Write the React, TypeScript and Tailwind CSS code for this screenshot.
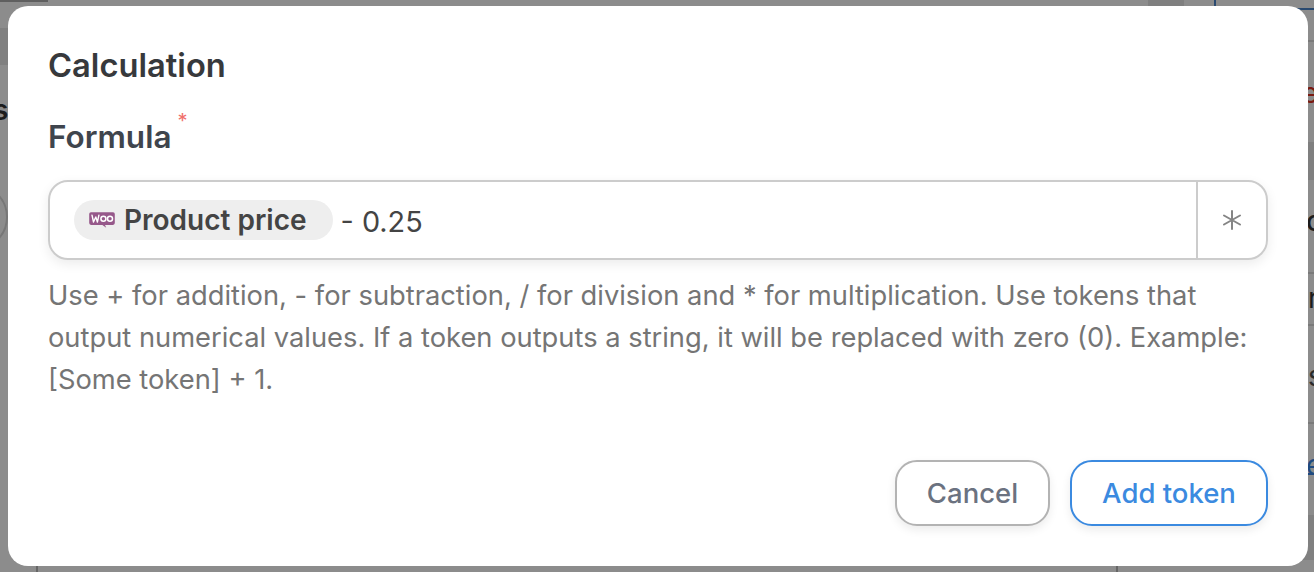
function Rule() {
  return <div className="h-[2px] w-full bg-[#7a7a7a]" />;
}

export default function App() {
  return (
    <div className="relative flex h-[572px] w-[1314px] flex-col overflow-hidden bg-[#8c8c8c] font-['Inter',sans-serif]">
      <div className="flex h-[6px] shrink-0">
        <div className="w-[48px] border-t-2 border-[#5f5f5f]" />
        <div className="w-[1100px]" />
        <div className="w-[36px] bg-[#7f7f7f]" />
        <div className="w-[30px]" />
        <div className="w-[2px] bg-[#2a4a70]" />
      </div>

      <div className="flex h-[560px] shrink-0 justify-between">
        <div className="flex w-[8px] flex-col overflow-hidden">
          <div className="mt-[22px] h-[37px] shrink-0 bg-[#808080]" />
          <span className="ml-[-7px] mt-[27px] text-[28px] font-semibold leading-[36px] text-[#1c1c1c]">s</span>
          <div className="ml-[-58px] mt-[56px] h-[66px] w-[66px] shrink-0 rounded-full border-2 border-[#777777]" />
        </div>
        <div className="flex w-[18px] flex-col overflow-hidden">
          <div className="mt-[2px] h-[2px] shrink-0 bg-[#2a4a70]" />
          <div className="mt-[30px]"><Rule /></div>
          <span className="mt-[33px] pl-[6px] text-[28px] leading-[36px] text-[#7a1a10]">e</span>
          <div className="mt-[31px] h-[38px] shrink-0 bg-[#7f7f7f]" />
          <span className="mt-[23px] pl-[10px] text-[28px] font-medium leading-[36px] text-[#1c1c1c]">c</span>
          <div className="mt-[33px]"><Rule /></div>
          <span className="mt-[6px] pl-[12px] text-[28px] leading-[36px] text-[#1c1c1c]">r</span>
          <div className="mt-[8px]"><Rule /></div>
          <span className="mt-[32px] pl-[12px] text-[28px] leading-[36px] text-[#2a2a2a]">s</span>
          <div className="mt-[28px]"><Rule /></div>
          <span className="mt-[23px] h-[28px] shrink-0 border-b-2 border-[#1f4a80] pl-[10px] text-[28px] leading-[36px] text-[#1f4a80]">e</span>
          <div className="mt-[40px] h-[45px] shrink-0 bg-[#808080]" />
        </div>
      </div>

      <div className="flex h-[6px] shrink-0">
        <div className="ml-[36px] w-[2px] bg-[#666666]" />
        <div className="ml-[1078px] w-[2px] bg-[#666666]" />
      </div>

      <div className="absolute left-[8px] top-[6px] flex h-[560px] w-[1300px] flex-col rounded-[20px] bg-white px-[40px] pt-[39px]">
        <h2 className="text-[32.7px] font-semibold leading-[40px] text-[#37393c]">Calculation</h2>
        <div className="mt-[32px] flex items-start">
          <span className="text-[31.5px] font-semibold leading-[40px] text-[#3f454d]">Formula</span>
          <span className="ml-[6px] mt-[-6px] text-[20px] leading-[20px] text-[#f0706a]">*</span>
        </div>
        <div className="mt-[23px] flex h-[80px] w-[1220px] rounded-[20px] border-2 border-[#cccccc] shadow-[0_4px_12px_rgba(0,0,0,0.08)]">
          <div className="flex flex-1 items-center pl-[24px]">
            <span className="flex h-[40px] items-center rounded-full bg-[#eeeeee] pl-[15px] pr-[26px]">
              <svg viewBox="0 0 26 16" className="h-[16px] w-[26px]">
                <path d="M2 0.3h22a1.8 1.8 0 0 1 1.8 1.8v9a1.8 1.8 0 0 1-1.8 1.8h-8l1.2 2.8-3.8-2.8H2a1.8 1.8 0 0 1-1.8-1.8V2.1A1.8 1.8 0 0 1 2 0.3z" fill="#96588a" />
                <path d="M3 3.2l1.5 6.8L6.8 5l1.6 5 1.5-6.8" fill="none" stroke="#fff" strokeWidth="1.4" strokeLinecap="round" strokeLinejoin="round" />
                <circle cx="14.4" cy="6.8" r="2.5" fill="none" stroke="#fff" strokeWidth="1.5" />
                <circle cx="21" cy="6.8" r="2.5" fill="none" stroke="#fff" strokeWidth="1.5" />
              </svg>
              <span className="ml-[9px] text-[28px] font-semibold leading-[36px] text-[#444444]">Product price</span>
            </span>
            <span className="ml-[8px] mt-[4px] text-[28.8px] leading-[36px] text-[#444444]">- 0.25</span>
          </div>
          <div className="flex w-[70px] items-center justify-center border-l-2 border-[#cccccc]">
            <svg viewBox="0 0 20 20" className="h-[20px] w-[20px]" stroke="#858585" strokeWidth="2" strokeLinecap="round">
              <path d="M10 1v18M2 5.5l16 9M18 5.5l-16 9" />
            </svg>
          </div>
        </div>
        <p className="mt-[15px] w-[1220px] text-[27.3px] leading-[42px] text-[#757575]">
          Use + for addition, - for subtraction, / for division and * for multiplication. Use tokens that output numerical values. If a token outputs a string, it will be replaced with zero (0). Example: [Some token] + 1.
        </p>
        <div className="mt-[59px] flex justify-end gap-[20px]">
          <button className="h-[66px] w-[155px] rounded-[22px] border-2 border-[#b3b3b3] bg-white pt-[2px] text-[27.5px] font-medium text-[#6b7280] shadow-[0_4px_10px_rgba(0,0,0,0.08)]">Cancel</button>
          <button className="h-[66px] w-[198px] rounded-[22px] border-2 border-[#3b8ae0] bg-white pt-[2px] text-[27.5px] font-medium text-[#3b8ae0] shadow-[0_4px_10px_rgba(0,0,0,0.08)]">Add token</button>
        </div>
      </div>
    </div>
  );
}
